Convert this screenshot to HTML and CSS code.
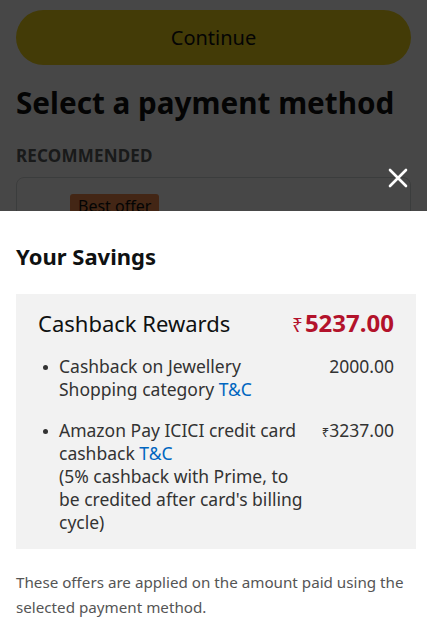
FILE: index.html
```html
<!DOCTYPE html>
<html lang="en">
<head>
<meta charset="utf-8">
<link rel="stylesheet" href="styles.css">
</head>
<body>
<main class="page">
  <button class="continue">Continue</button>
  <h1 class="title">Select a payment method</h1>
  <div class="section-label">RECOMMENDED</div>
  <div class="method-card">
    <span class="badge">Best offer</span>
  </div>
</main>
<div class="overlay"></div>
<button class="close" aria-label="Close">
  <svg width="20" height="20" viewBox="0 0 20 20"><path d="M2 2 L18 18 M18 2 L2 18" stroke="#fff" stroke-width="2.6" stroke-linecap="round"/></svg>
</button>
<section class="sheet">
  <h2 class="sheet-title">Your Savings</h2>
  <div class="savings-box">
    <div class="total-row">
      <span class="total-label">Cashback Rewards</span>
      <span class="total-amount"><span class="rupee">₹</span>5237.00</span>
    </div>
    <ul class="items">
      <li class="item">
        <span class="item-text">Cashback on Jewellery Shopping category <a class="tc">T&amp;C</a></span>
        <span class="item-amount">2000.00</span>
      </li>
      <li class="item">
        <span class="item-text">Amazon Pay ICICI credit card cashback <a class="tc">T&amp;C</a><br>(5% cashback with Prime, to be credited after card's billing cycle)</span>
        <span class="item-amount"><span class="small-rupee">₹</span>3237.00</span>
      </li>
    </ul>
  </div>
  <p class="note">These offers are applied on the amount paid using the selected payment method.</p>
</section>
</body>
</html>
```
FILE: styles.css
```css
* { box-sizing: border-box; }
html, body { margin: 0; padding: 0; }
body {
  width: 427px;
  height: 626px;
  overflow: hidden;
  background: #fff;
  font-family: "Noto Sans", "Liberation Sans", sans-serif;
  color: #0f1111;
}
.page {
  padding: 10px 16px 0 16px;
}
.continue {
  display: block;
  width: 100%;
  height: 55px;
  border: none;
  border-radius: 28px;
  background: #efd21a;
  font-family: inherit;
  font-size: 20px;
  color: #0f1111;
}
.title {
  margin: 18px 0 0 0;
  font-size: 29.7px;
  line-height: 40px;
  font-weight: 700;
}
.section-label {
  margin-top: 22px;
  font-size: 17px;
  line-height: 22px;
  font-weight: 700;
  color: #5a5d5d;
  letter-spacing: 0.2px;
}
.method-card {
  margin-top: 10px;
  height: 80px;
  border: 1px solid #d5d9d9;
  border-radius: 8px;
  padding: 16px 0 0 53px;
}
.badge {
  display: inline-block;
  background: #f08a4b;
  color: #0f1111;
  font-size: 16px;
  line-height: 24px;
  padding: 0 8px;
  border-radius: 3px;
}
.overlay {
  position: fixed;
  inset: 0;
  background: rgba(0, 0, 0, 0.72);
}
.close {
  position: fixed;
  left: 387px;
  top: 167px;
  width: 22px;
  height: 22px;
  padding: 1px;
  border: none;
  background: transparent;
}
.close svg { display: block; }
.sheet {
  position: fixed;
  left: 0;
  right: 0;
  top: 211px;
  bottom: 0;
  background: #fff;
  padding: 31px 11px 0 16px;
}
.sheet-title {
  margin: 0;
  font-size: 22px;
  line-height: 28px;
  font-weight: 700;
  color: #0f1111;
}
.savings-box {
  margin-top: 24px;
  background: #f2f2f2;
  padding: 15px 22px 15px 22px;
}
.total-row {
  display: flex;
  justify-content: space-between;
  align-items: baseline;
}
.total-label {
  font-size: 22px;
  line-height: 28px;
  color: #0f1111;
}
.total-amount {
  font-size: 24px;
  line-height: 28px;
  font-weight: 700;
  color: #b3122b;
}
.rupee {
  font-size: 19px;
  font-weight: 400;
  margin-right: 2px;
}
.items {
  list-style: none;
  margin: 16px 0 0 0;
  padding: 0;
  display: flex;
  flex-direction: column;
  gap: 18px;
}
.item {
  display: grid;
  grid-template-columns: 1fr auto;
  column-gap: 14px;
  font-size: 17.5px;
  line-height: 23px;
  color: #333;
  padding-left: 21px;
  position: relative;
}
.item::before {
  content: "";
  position: absolute;
  left: 5px;
  top: 10px;
  width: 5px;
  height: 5px;
  border-radius: 50%;
  background: #333;
}
.tc {
  display: inline-block;
  line-height: 23px;
  color: #0066c0;
  text-decoration: none;
}
.small-rupee {
  font-size: 13px;
}
.note {
  margin: 21px 0 0 0;
  font-size: 15.2px;
  line-height: 25px;
  color: #555;
}
```
